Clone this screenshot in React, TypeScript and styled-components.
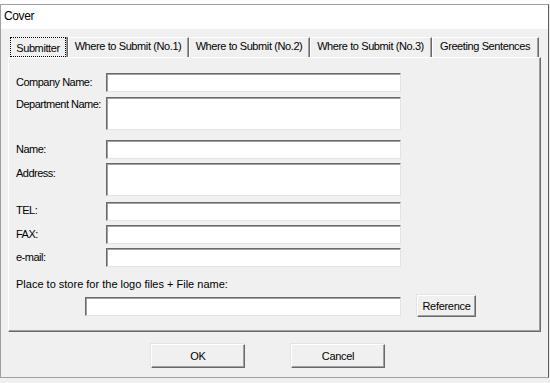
import styled, { createGlobalStyle } from "styled-components";

const GlobalStyle = createGlobalStyle`
  * {
    box-sizing: border-box;
  }
  html,
  body {
    margin: 0;
    padding: 0;
    background: #f0f0f0;
    font-family: "Liberation Sans", Arial, sans-serif;
    font-size: 11px;
    color: #000;
  }
`;

const tabs = [
  { label: "Submitter", width: 58 },
  { label: "Where to Submit (No.1)", width: 121 },
  { label: "Where to Submit (No.2)", width: 121 },
  { label: "Where to Submit (No.3)", width: 122 },
  { label: "Greeting Sentences", width: 107 },
];

const fields = [
  { label: "Company Name:", tall: false, gap: 0, labelTop: 3 },
  { label: "Department Name:", tall: true, gap: 5, labelTop: 1 },
  { label: "Name:", tall: false, gap: 10, labelTop: 3 },
  { label: "Address:", tall: true, gap: 4, labelTop: 4 },
  { label: "TEL:", tall: false, gap: 6, labelTop: 2 },
  { label: "FAX:", tall: false, gap: 4, labelTop: 3 },
  { label: "e-mail:", tall: false, gap: 4, labelTop: 3 },
];

const App = () => {
  return (
    <>
      <GlobalStyle />
      <TopStrip />
      <Window>
        <TitleBar>Cover</TitleBar>
        <WindowBody>
          <TabStrip>
            {tabs.map((t, i) => (
              <TabItem key={t.label} $width={t.width}>
                <TabLabel $active={i === 0}>{t.label}</TabLabel>
              </TabItem>
            ))}
          </TabStrip>
          <Panel>
            {fields.map((f) => (
              <FieldRow key={f.label} $gap={f.gap}>
                <FieldLabel $top={f.labelTop}>{f.label}</FieldLabel>
                <TextBox $tall={f.tall} />
              </FieldRow>
            ))}
            <LogoLabel>Place to store for the logo files + File name:</LogoLabel>
            <LogoRow>
              <FileBox />
              <SmallButton>Reference</SmallButton>
            </LogoRow>
          </Panel>
          <ButtonRow>
            <DialogButton>OK</DialogButton>
            <DialogButton>Cancel</DialogButton>
          </ButtonRow>
        </WindowBody>
      </Window>
    </>
  );
};

export default App;

const TopStrip = styled.div`
  height: 4px;
  background: #ffffff;
`;

const Window = styled.div`
  width: 549px;
  border-top: 1px solid #a0a0a0;
  border-left: 1px solid #a0a0a0;
  border-right: 1px solid #5a5a5a;
  border-bottom: 1px solid #a0a0a0;
  background: #f0f0f0;
`;

const TitleBar = styled.div`
  height: 24px;
  line-height: 22px;
  padding-left: 3px;
  background: #ffffff;
  font-size: 12px;
  letter-spacing: -0.4px;
`;

const WindowBody = styled.div`
  padding: 8px 0 9px 7px;
`;

const TabStrip = styled.div`
  display: flex;
  padding-left: 2px;
  height: 20px;
`;

const TabItem = styled.div<{ $width: number }>`
  width: ${(p) => p.$width}px;
  height: 20px;
  display: flex;
  border-top: 1px solid #ffffff;
  border-left: 1px solid #ffffff;
  border-right: 1px solid #696969;
  box-shadow: inset -1px 0 0 #a0a0a0;
  &:first-child {
    border-left: none;
    border-top: none;
  }
`;

const TabLabel = styled.span<{ $active: boolean }>`
  flex: 1;
  margin-right: 1px;
  text-align: center;
  line-height: ${(p) => (p.$active ? "16px" : "17px")};
  white-space: nowrap;
  letter-spacing: -0.4px;
  border: ${(p) => (p.$active ? "1px dotted #000" : "none")};
  padding-top: ${(p) => (p.$active ? "2px" : "0")};
`;

const Panel = styled.div`
  width: 533px;
  padding: 15px 0 14px 7px;
  border-top: 1px solid #ffffff;
  border-left: 1px solid #ffffff;
  border-right: 1px solid #696969;
  border-bottom: 1px solid #696969;
  box-shadow: inset -1px -1px 0 #a0a0a0;
`;

const FieldRow = styled.div<{ $gap: number }>`
  display: flex;
  align-items: flex-start;
  margin-top: ${(p) => p.$gap}px;
`;

const FieldLabel = styled.div<{ $top: number }>`
  width: 90px;
  line-height: 13px;
  margin-top: ${(p) => p.$top}px;
  letter-spacing: -0.5px;
  white-space: nowrap;
`;

const TextBox = styled.div<{ $tall: boolean }>`
  width: 295px;
  height: ${(p) => (p.$tall ? 33 : 19)}px;
  background: #ffffff;
  border: 1px solid;
  border-color: #696969 #e3e3e3 #e3e3e3 #696969;
  box-shadow: inset 1px 1px 0 #a0a0a0;
`;

const LogoLabel = styled.div`
  margin-top: 11px;
  line-height: 13px;
  white-space: nowrap;
`;

const LogoRow = styled.div`
  display: flex;
  align-items: center;
  gap: 16px;
  margin-top: 4px;
  padding-left: 69px;
  height: 22px;
`;

const FileBox = styled(TextBox)`
  width: 316px;
`;

const ButtonBase = styled.div`
  display: flex;
  align-items: center;
  justify-content: center;
  background: #f0f0f0;
  border: 1px solid;
  border-color: #ffffff #696969 #696969 #ffffff;
  box-shadow: inset -1px -1px 0 #a0a0a0, -1px -1px 0 #e3e3e3;
  letter-spacing: -0.3px;
`;

const SmallButton = styled(ButtonBase)`
  width: 59px;
  height: 22px;
`;

const DialogButton = styled(ButtonBase)`
  width: 94px;
  height: 24px;
`;

const ButtonRow = styled.div`
  display: flex;
  gap: 46px;
  margin-top: 12px;
  padding-left: 143px;
`;
